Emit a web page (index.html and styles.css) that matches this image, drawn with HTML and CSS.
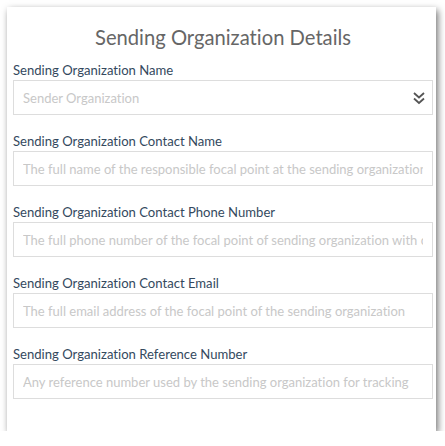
FILE: index.html
```html
<!DOCTYPE html>
<html>
<head>
<meta charset="utf-8">
<link rel="stylesheet" href="styles.css">
</head>
<body>
<div class="card">
  <h2 class="title">Sending Organization Details</h2>
  <div class="field">
    <label class="label">Sending Organization Name</label>
    <div class="input select">
      <span class="ph">Sender Organization</span>
      <svg class="chev" width="14" height="14" viewBox="0 0 14 14"><path d="M2 2 L7 6.5 L12 2 M2 7.5 L7 12 L12 7.5" fill="none" stroke="#555" stroke-width="1.8"/></svg>
    </div>
  </div>
  <div class="field">
    <label class="label">Sending Organization Contact Name</label>
    <div class="input"><span class="ph">The full name of the responsible focal point at the sending organization</span></div>
  </div>
  <div class="field">
    <label class="label">Sending Organization Contact Phone Number</label>
    <div class="input"><span class="ph">The full phone number of the focal point of sending organization with country code</span></div>
  </div>
  <div class="field">
    <label class="label">Sending Organization Contact Email</label>
    <div class="input"><span class="ph">The full email address of the focal point of the sending organization</span></div>
  </div>
  <div class="field">
    <label class="label">Sending Organization Reference Number</label>
    <div class="input"><span class="ph">Any reference number used by the sending organization for tracking</span></div>
  </div>
</div>
</body>
</html>
```
FILE: styles.css
```css
html, body {
  margin: 0;
  padding: 0;
  background: #fff;
}
body {
  padding: 7px 0 0 7px;
  font-family: Lato, "Open Sans", sans-serif;
  font-variant-ligatures: none;
}
.card {
  width: 429px;
  height: 424px;
  box-sizing: border-box;
  background: #fff;
  box-shadow: 2px 3px 7px rgba(0, 0, 0, 0.55);
  padding: 0 3px 0 6px;
  display: flex;
  flex-direction: column;
}
.title {
  margin: 0;
  height: 53px;
  padding-top: 18px;
  box-sizing: border-box;
  text-align: center;
  font-weight: 400;
  font-size: 20.2px;
  line-height: 24px;
  color: #666;
}
.field {
  display: flex;
  flex-direction: column;
  margin-bottom: 16px;
}
.label {
  font-size: 13.1px;
  line-height: 20px;
  color: #34495e;
}
.input {
  height: 35px;
  box-sizing: border-box;
  border: 1px solid #ddd;
  display: flex;
  align-items: center;
  padding: 0 9px;
  overflow: hidden;
}
.ph {
  font-size: 13px;
  color: #c8c8c8;
  white-space: nowrap;
  flex: 1;
  overflow: hidden;
}
.chev {
  flex: none;
  margin-right: -3px;
}
```
